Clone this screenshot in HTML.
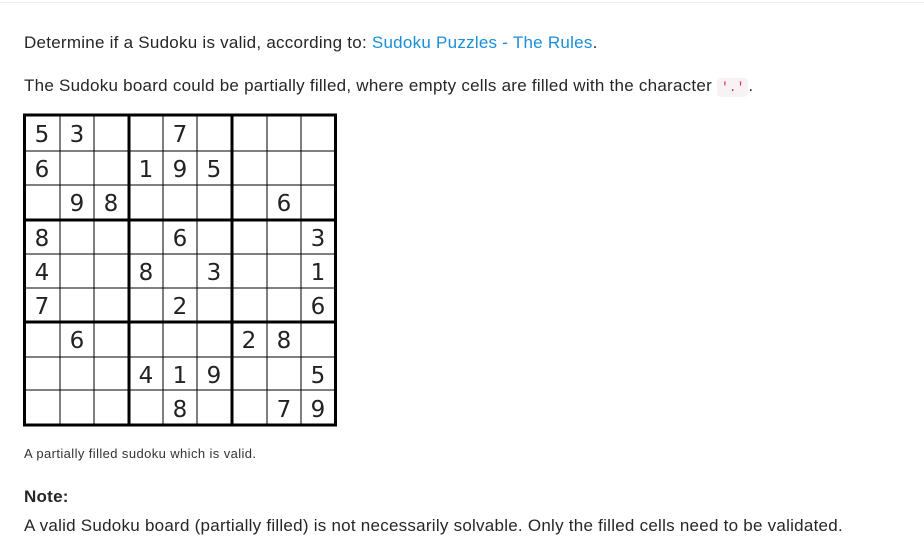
<!DOCTYPE html>
<html><head><meta charset="utf-8"><style>
body{margin:0;background:#fff;width:924px;height:557px;overflow:hidden;font-family:"Liberation Sans",Arial,sans-serif;color:#262626;}
.top{position:absolute;left:0;top:2px;width:924px;border-top:1px solid #eee;}
.t{position:absolute;left:24px;font-size:17px;letter-spacing:0.25px;white-space:nowrap;}
a{color:#1a8fd6;text-decoration:none;}
code{font-family:"Liberation Mono",monospace;font-size:13px;letter-spacing:0;color:#e0245e;background:#f7f2f3;border-radius:4px;padding:2px 4px;}
</style></head><body>
<div class="top"></div>
<div class="t" style="top:33px">Determine if a Sudoku is valid, according to: <a>Sudoku Puzzles - The Rules</a>.</div>
<div class="t" style="top:76px">The Sudoku board could be partially filled, where empty cells are filled with the character <code>'.'</code>.</div>
<svg style="position:absolute;left:0;top:0" width="924" height="557">
<g stroke="#000" fill="none">
<rect x="24.5" y="115" width="311" height="310" stroke-width="3"/>
<g stroke-width="1">
<line x1="60" y1="115" x2="60" y2="425"/><line x1="94" y1="115" x2="94" y2="425"/>
<line x1="163" y1="115" x2="163" y2="425"/><line x1="197" y1="115" x2="197" y2="425"/>
<line x1="267" y1="115" x2="267" y2="425"/><line x1="301" y1="115" x2="301" y2="425"/>
<line x1="24" y1="151" x2="336" y2="151"/><line x1="24" y1="185" x2="336" y2="185"/>
<line x1="24" y1="254" x2="336" y2="254"/><line x1="24" y1="288" x2="336" y2="288"/>
<line x1="24" y1="357" x2="336" y2="357"/><line x1="24" y1="390" x2="336" y2="390"/>
</g>
<g stroke-width="3">
<line x1="129" y1="115" x2="129" y2="425"/><line x1="232" y1="115" x2="232" y2="425"/>
<line x1="24" y1="220" x2="336" y2="220"/><line x1="24" y1="322" x2="336" y2="322"/>
</g>
</g>
<g font-family="DejaVu Sans,sans-serif" font-size="23" fill="#222" text-anchor="middle">
<text x="42" y="142">5</text><text x="77" y="142">3</text><text x="180" y="142">7</text>
<text x="42" y="177">6</text><text x="146" y="177">1</text><text x="180" y="177">9</text><text x="214" y="177">5</text>
<text x="77" y="211">9</text><text x="111" y="211">8</text><text x="284" y="211">6</text>
<text x="42" y="246">8</text><text x="180" y="246">6</text><text x="318" y="246">3</text>
<text x="42" y="280">4</text><text x="146" y="280">8</text><text x="214" y="280">3</text><text x="318" y="280">1</text>
<text x="42" y="314">7</text><text x="180" y="314">2</text><text x="318" y="314">6</text>
<text x="77" y="348">6</text><text x="249" y="348">2</text><text x="284" y="348">8</text>
<text x="146" y="383">4</text><text x="180" y="383">1</text><text x="214" y="383">9</text><text x="318" y="383">5</text>
<text x="180" y="417">8</text><text x="284" y="417">7</text><text x="318" y="417">9</text>
</g>
</svg>
<div class="t" style="top:446px;font-size:13px;letter-spacing:0.4px;color:#333">A partially filled sudoku which is valid.</div>
<div class="t" style="top:487px;font-weight:bold">Note:</div>
<div class="t" style="top:516px">A valid Sudoku board (partially filled) is not necessarily solvable. Only the filled cells need to be validated.</div>
</body></html>
